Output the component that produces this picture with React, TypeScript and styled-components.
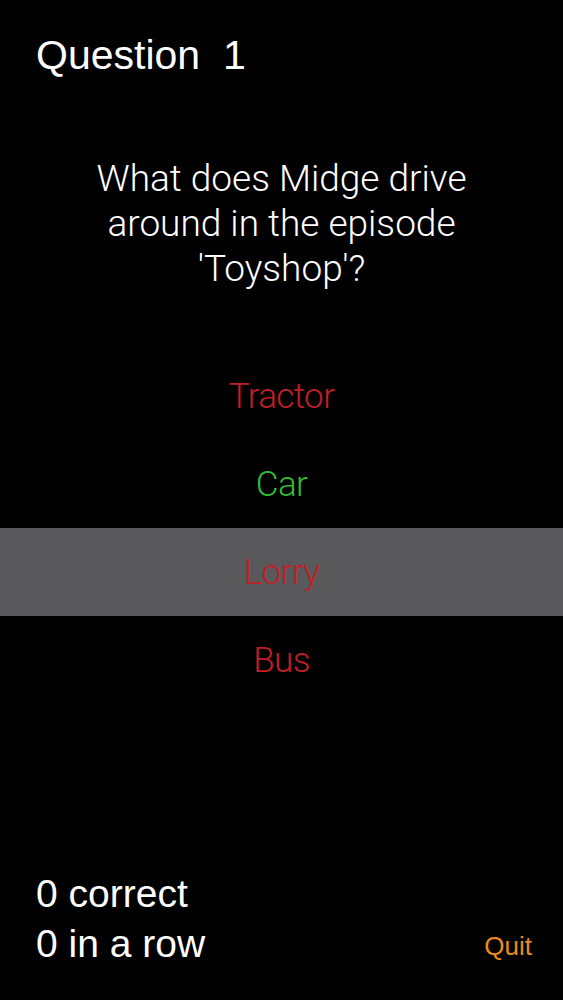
import React from "react";
import styled, { createGlobalStyle } from "styled-components";

const Global = createGlobalStyle`
  html, body { margin: 0; padding: 0; background: #000; }
  #root { min-height: 1000px; }
`;

const Screen = styled.div`
  width: 563px;
  height: 1000px;
  background: #000;
  color: #fff;
  display: flex;
  flex-direction: column;
  font-family: "Liberation Sans", Arial, sans-serif;
  overflow: hidden;
`;

const Header = styled.h1`
  margin: 0;
  padding: 32px 36px 0;
  font-size: 41px;
  font-weight: 400;
  line-height: 46px;
  white-space: pre;
`;

const Prompt = styled.p`
  margin: 78px 0 0;
  padding: 0 30px;
  text-align: center;
  font-family: Roboto, "Liberation Sans", sans-serif;
  font-weight: 300;
  font-size: 37px;
  line-height: 45px;
`;

const Answers = styled.ul`
  list-style: none;
  margin: 61px 0 0;
  padding: 0;
  display: flex;
  flex-direction: column;
`;

const Answer = styled.li<{ $tone: "red" | "green"; $selected?: boolean }>`
  height: 88px;
  display: flex;
  align-items: center;
  justify-content: center;
  font-family: Roboto, "Liberation Sans", sans-serif;
  font-weight: 300;
  font-size: 35px;
  letter-spacing: -0.6px;
  color: ${(p) => (p.$tone === "green" ? "#2fbf2f" : "#c21f25")};
  background: ${(p) => (p.$selected ? "#59585a" : "transparent")};
`;

const Footer = styled.div`
  margin-top: auto;
  padding: 0 31px 31px 36px;
  display: flex;
  align-items: flex-end;
  justify-content: space-between;
`;

const Stats = styled.div`
  display: flex;
  flex-direction: column;
  font-size: 39px;
  line-height: 50px;
`;

const Quit = styled.button`
  background: none;
  border: none;
  padding: 0 0 7px;
  font-family: "Liberation Sans", Arial, sans-serif;
  font-size: 26px;
  color: #ea8a1d;
`;

const answers: { label: string; tone: "red" | "green"; selected?: boolean }[] = [
  { label: "Tractor", tone: "red" },
  { label: "Car", tone: "green" },
  { label: "Lorry", tone: "red", selected: true },
  { label: "Bus", tone: "red" },
];

export default function App() {
  return (
    <Screen>
      <Global />
      <Header>{"Question  1"}</Header>
      <Prompt>
        What does Midge drive
        <br />
        around in the episode
        <br />
        'Toyshop'?
      </Prompt>
      <Answers>
        {answers.map((a) => (
          <Answer key={a.label} $tone={a.tone} $selected={a.selected}>
            {a.label}
          </Answer>
        ))}
      </Answers>
      <Footer>
        <Stats>
          <span>0 correct</span>
          <span>0 in a row</span>
        </Stats>
        <Quit>Quit</Quit>
      </Footer>
    </Screen>
  );
}
